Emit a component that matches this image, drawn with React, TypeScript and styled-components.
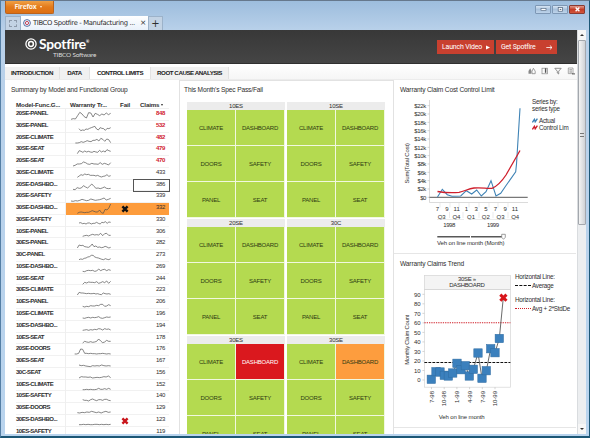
import React from 'react'
import styled, { createGlobalStyle } from 'styled-components';

// [name, claims, first x of the sparkline, heights inside of the row, mark]
type Claim = [string, number, number, number[], string?]

const claims: Claim[] = [
    ['20SE-PANEL', 848, 213, [31, 29, 30, 20, 10, 15, 23, 27, 11, 12, 24, 13, 16, 20, 15, 18, 12, 17, 13]],
    ['30SE-PANEL', 532, 237, [23, 29, 27, 28, 24, 25, 22, 20, 18, 16, 24, 27, 20, 22, 23, 28, 22, 23, 20]],
    ['20SE-CLIMATE', 482, 226, [30, 30, 29, 26, 28, 26, 23, 25, 26, 22, 22, 19, 24, 16, 19, 25, 18, 20, 29]],
    ['30SE-SEAT', 479, 232, [29, 20, 22, 25, 21, 24, 22, 24, 25, 22, 24, 25, 19, 24, 21, 24, 17, 20, 22]],
    ['20SE-SEAT', 470, 219, [30, 28, 24, 24, 23, 18, 20, 24, 25, 22, 24, 24, 25, 20, 25, 22, 24, 27, 20]],
    ['30SE-CLIMATE', 433, 232, [28, 24, 20, 22, 18, 20, 19, 22, 22, 22, 24, 22, 25, 27, 25, 24, 20, 25, 23]],
    ['20SE-DASHBO...', 386, 219, [28, 29, 23, 25, 24, 17, 21, 24, 18, 12, 19, 25, 24, 26, 24, 21, 25, 26, 25]],
    ['20SE-SAFETY', 339, 213, [30, 31, 29, 30, 28, 25, 27, 29, 28, 24, 26, 28, 27, 26, 24, 21, 27, 25, 22]],
    ['30SE-DASHBO...', 332, 232, [31, 28, 27, 28, 29, 28, 28, 26, 23, 25, 27, 27, 21, 29, 31, 19, 21, 15, 3], 'warn'],
    ['30SE-SAFETY', 330, 237, [24, 23, 26, 25, 27, 24, 24, 27, 25, 25, 22, 25, 27, 22, 23, 20, 25, 21, 22]],
    ['10SE-PANEL', 306, 248, [28, 26, 25, 27, 24, 22, 24, 23, 24, 19, 26, 20, 19, 25, 25]],
    ['30ES-PANEL', 282, 232, [30, 21, 23, 22, 26, 27, 28, 25, 18, 26, 24, 28, 27, 29, 28, 25, 27, 30, 28]],
    ['30C-PANEL', 273, 237, [29, 27, 28, 25, 24, 21, 20, 16, 16, 21, 23, 24, 26, 28, 29, 26, 28, 29, 26]],
    ['10SE-DASHBO...', 269, 248, [28, 29, 26, 25, 26, 25, 28, 27, 21, 26, 23, 22, 26, 23, 25]],
    ['10SE-SEAT', 244, 248, [31, 25, 27, 24, 25, 25, 26, 23, 28, 26, 23, 26, 21, 28, 22]],
    ['30ES-CLIMATE', 223, 232, [30, 22, 24, 24, 25, 26, 25, 26, 26, 25, 27, 26, 28, 29, 24, 26, 27, 26, 28]],
    ['10ES-PANEL', 206, 248, [28, 30, 28, 29, 26, 27, 27, 25, 26, 22, 22, 28, 27, 23, 26]],
    ['10SE-CLIMATE', 196, 248, [27, 28, 26, 25, 27, 25, 26, 25, 23, 27, 28, 26, 24, 25, 24]],
    ['10ES-DASHBO...', 194, 248, [28, 27, 26, 28, 26, 27, 25, 26, 23, 24, 27, 23, 25, 24, 27]],
    ['10ES-SEAT', 178, 248, [30, 25, 27, 28, 26, 28, 27, 25, 18, 24, 29, 27, 22, 25, 25]],
    ['20SE-DOORS', 176, 224, [30, 30, 28, 15, 16, 28, 28, 29, 28, 29, 29, 30, 29, 29, 28, 29, 30, 29, 30]],
    ['30ES-SEAT', 167, 237, [27, 29, 28, 30, 31, 32, 29, 30, 29, 30, 27, 29, 30, 29, 30]],
    ['30C-SEAT', 156, 237, [30, 26, 27, 27, 28, 27, 30, 29, 28, 29, 28, 26, 27, 24, 29]],
    ['10ES-CLIMATE', 152, 248, [29, 29, 28, 29, 28, 29, 29, 28, 25, 28, 28, 26, 28, 25, 28]],
    ['10SE-SAFETY', 140, 248, [26, 28, 28, 30, 26, 24, 27, 29, 26, 26, 28, 25, 25, 28, 29]],
    ['30SE-DOORS', 129, 232, [29, 30, 28, 29, 27, 28, 25, 27, 29, 27, 30, 27, 25, 28, 27]],
    ['30ES-DASHBO...', 123, 237, [29, 29, 28, 29, 28, 29, 29, 28, 28, 29, 28, 29, 28, 29, 28], 'fail'],
    ['10ES-SAFETY', 119, 248, [34, 34, 34, 34]],
];

const groups = ['10ES', '10SE', '20SE', '30C', '30ES', '30SE'];
const parts = ['CLIMATE', 'DASHBOARD', 'DOORS', 'SAFETY', 'PANEL', 'SEAT'];

const trend = [
    [431.3, 379.3], [436, 371.7], [440, 372], [444.3, 375.3], [448.3, 376], [452.7, 373],
    [457, 363.3], [461, 369.7], [465.3, 365.7], [469.3, 376], [473.3, 369.3], [478, 353],
    [482, 378.3], [486.3, 370.7], [490.7, 348.7], [495, 352.7], [499.3, 338.5],
];

const Spark = ({ start, values }: { start: number, values: number[] }) => {
    const step = (332 - start) / (values.length - 1);
    const points = values.map((v, i) => `${start + i * step},${v}`).join(' ');
    return (
        <SparkSvg viewBox="198 0 156 35.3">
            <polyline points={points} fill="none" stroke="#4a4a4a" strokeWidth="2" />
        </SparkSvg>
    )
}

const Cross = ({ color }: { color: string }) => (
    <svg width="8" height="8" viewBox="0 0 8 8">
        <path d="M1.4 1.4 L6.6 6.6 M6.6 1.4 L1.4 6.6" stroke={color} strokeWidth="2.4" />
    </svg>
)

const Target = ({ size, color, inner }: { size: number, color: string, inner: string }) => (
    <svg width={size} height={size} viewBox="0 0 12 12" fill="none">
        <circle cx="6" cy="6" r="5.1" stroke={color} strokeWidth="1.3" />
        <circle cx="6" cy="6" r="2.4" stroke={inner} strokeWidth="1.5" />
    </svg>
)

const ClaimTable = () => (
    <Table>
        <TableHead>
            <span>Model-Func.G...</span>
            <HeadTrend>Warranty Tr...</HeadTrend>
            <HeadFail>Fail</HeadFail>
            <HeadClaims>Claims<Caret /></HeadClaims>
        </TableHead>
        {claims.map(([name, value, start, values, mark], i) => (
            <Row key={name}>
                <Name>{name}</Name>
                <TrendCell $warn={mark === 'warn'}><Spark start={start} values={values} /></TrendCell>
                <FailCell $warn={mark === 'warn'}>
                    {mark && <Cross color={mark === 'warn' ? '#111' : '#c9151b'} />}
                </FailCell>
                <Value $warn={mark === 'warn'} $high={i < 5} $selected={i === 6}>{value}</Value>
            </Row>
        ))}
    </Table>
)

const CostChart = () => (
    <Chart width={130} height={154} viewBox="400 98 130 154">
        <path d="M429.5 100 V202.5 H528" stroke="#ccc" strokeWidth=".7" fill="none" />
        {Array.from({ length: 12 }, (_, i) => (
            <g key={i}>
                <path d={`M427.5 ${197.3 - i * 8.33} h2`} stroke="#bbb" strokeWidth=".6" />
                <text x="426.3" y={199.6 - i * 8.33} textAnchor="end" textLength={i === 0 ? 6 : i < 5 ? 8.7 : 12}>
                    {i === 0 ? '$0' : `$${i * 2}k`}
                </text>
            </g>
        ))}
        <text transform="translate(408.8 183.5) rotate(-90)" textLength="40.5">Sum(Total Cost)</text>
        <path d="M429.5 197.3 H527.7" stroke="#444" strokeWidth=".9" />
        <polyline
            points="437.5,197 442.3,189.3 447.3,194.7 452,196.3 460.7,196 466.3,190.7 471.7,194 476.7,190 481.3,196 486,191.7 491,180.7 496,196 500.7,193.3 505.7,186 515.7,171.7 516.5,164 520,108.3"
            fill="none" stroke="#3f83b5" strokeWidth="1.1" />
        <path
            d="M437.5 191.5 C444 192.6 454 192.8 459 192.4 C465 191.2 468 188.6 474 188 C482 187.2 487 189 492 188.3 C498 186 502 181 506 175 L520 150.5"
            fill="none" stroke="#cf1f2c" strokeWidth="1.3" />
        {['7', '9', '11', '1', '3', '5', '7', '9', '11'].map((label, i) => (
            <text key={i} x={437.3 + i * 9.7} y="210.7" textAnchor="middle">{label}</text>
        ))}
        {['Q3', 'Q4', 'Q1', 'Q2', 'Q3', 'Q4'].map((label, i) => (
            <text key={i} x={441.7 + i * 14.7} y="218.7" textAnchor="middle">{label}</text>
        ))}
        <path d="M440 202.5v5M450 202.5v5M459 202.5v5M469 202.5v5M479 202.5v5M489 202.5v5M498 202.5v5M508 202.5v5M449.5 212v6M463 212v6M479 212v6M493 212v6M508 212v6M437 219.5H464M468 219.5H519" stroke="#ddd" strokeWidth=".6" />
        <text x="449.3" y="226.8" textAnchor="middle" textLength="12">1998</text>
        <text x="493" y="226.8" textAnchor="middle" textLength="12">1999</text>
        <path d="M437.3 236.8 H470 M471 236.8 H502" stroke="#585858" strokeWidth="1.5" />
        <path d="M501.7 234.3 h3.6 v3 l-1.8 2 l-1.8 -2 z" fill="#fff" stroke="#777" strokeWidth=".7" />
        <text x="437" y="244.7" textLength="67.5">Veh on line month (Month)</text>
    </Chart>
)

const TrendChart = () => (
    <Chart width={113} height={150} viewBox="400 272 113 150">
        <rect x="424.4" y="275.4" width="86" height="14.2" fill="#f4f4f4" stroke="#d5d5d5" strokeWidth=".7" />
        <rect x="424.4" y="289.6" width="86" height="97.6" fill="none" stroke="#d5d5d5" strokeWidth=".7" />
        <text x="467" y="281.3" textAnchor="middle" textLength="18">30SE »</text>
        <text x="467" y="287.4" textAnchor="middle" textLength="35.5">DASHBOARD</text>
        {Array.from({ length: 10 }, (_, i) => (
            <g key={i}>
                <path d={`M422.4 ${380 - i * 9.52} h2`} stroke="#bbb" strokeWidth=".6" />
                <text x="420.7" y={382.3 - i * 9.52} textAnchor="end">{i * 10}</text>
            </g>
        ))}
        <text transform="translate(408.8 364.8) rotate(-90)" textLength="50">Monthly Claim Count</text>
        <path d="M424.4 322.7 H510.4" stroke="#d0202a" strokeWidth="1.1" strokeDasharray="1.3 1" />
        <path d="M424.4 362.5 H510.4" stroke="#111" strokeWidth="1.1" strokeDasharray="2.8 1.2" />
        <polyline points={[...trend, [503.3, 297.7]].map(p => p.join(',')).join(' ')} fill="none" stroke="#444" strokeWidth=".8" />
        {trend.map(([x, y]) => (
            <rect key={x} x={x - 4.2} y={y - 4.2} width="8.4" height="8.4" fill="#3b80bd" stroke="#2f6a9f" strokeWidth=".5" />
        ))}
        <path d="M500.3 294.6 l6.2 6.2 M506.5 294.6 l-6.2 6.2" stroke="#d8161c" strokeWidth="3" />
        {['7-98', '10-98', '1-99', '4-99', '7-99', '10-99'].map((label, i) => (
            <g key={label}>
                <path d={`M${431.5 + i * 12.7} 387.2 v2`} stroke="#bbb" strokeWidth=".6" />
                <text transform={`translate(${433.7 + i * 12.7} 391) rotate(-90)`} textAnchor="end">{label}</text>
            </g>
        ))}
        <text x="438.7" y="418.6" textLength="46">Veh on line month</text>
    </Chart>
)

const App = () => (
    <>
        <GlobalStyle />
        <Window>
            <TitleBar>
                <FirefoxButton>Firefox <Caret /></FirefoxButton>
                <Controls>
                    <Control><svg width="7" height="5"><rect x="1" y="1.5" width="5" height="2" fill="#fff" stroke="#4a5f78" strokeWidth=".6" /></svg></Control>
                    <Control><svg width="7" height="5"><rect x="1.2" y=".6" width="4.4" height="3.6" fill="#fff" stroke="#4a5f78" strokeWidth=".7" /><path d="M2.7 2.4h1.6" stroke="#4a5f78" /></svg></Control>
                    <Control $close><svg width="7" height="5"><path d="M1.6 .6l3.8 3.6M5.4 .6L1.6 4.2" stroke="#fff" strokeWidth="1.4" /></svg></Control>
                </Controls>
            </TitleBar>
            <BrowserTabs>
                <PinnedTab><i /></PinnedTab>
                <BrowserTab>
                    <Target size={8} color="#3f5c96" inner="#c2455c" />
                    <span>TIBCO Spotfire - Manufacturing ...</span>
                    <b>×</b>
                </BrowserTab>
                <NewTab>+</NewTab>
            </BrowserTabs>
            <Body>
                <Page>
                    <Header>
                        <Logo>
                            <Target size={12} color="#fff" inner="#fff" />
                            <div>
                                <Brand>Spotfire<sup>®</sup></Brand>
                                <Company>TIBCO Software</Company>
                            </div>
                        </Logo>
                        <Actions>
                            <ActionButton $width={57}>Launch Video <svg width="4" height="5"><path d="M0 .5L4 2.5L0 4.5z" fill="#fff" /></svg></ActionButton>
                            <ActionButton $width={61}>Get Spotfire <svg width="7" height="5"><path d="M.3 2.5H6M3.8 .4L6 2.5L3.8 4.6" fill="none" stroke="#fff" strokeWidth=".8" /></svg></ActionButton>
                        </Actions>
                    </Header>
                    <NavBar>
                        <NavTab $width={55}>INTRODUCTION</NavTab>
                        <NavTab $width={30}>DATA</NavTab>
                        <NavTab $width={61} $active>CONTROL LIMITS</NavTab>
                        <NavTab $width={78}>ROOT CAUSE ANALYSIS</NavTab>
                        <Tools>
                            <svg width="8" height="8" viewBox="0 0 8 8"><path d="M.5 6.8V4L2.2 1.3L3.4 3.8V6.8z" fill="#888" /><path d="M4 6.7V4.2L5.4 1.3L7.2 4.2V6.7z" fill="none" stroke="#888" strokeWidth=".8" /></svg>
                            <svg width="8" height="8" viewBox="0 0 8 8"><rect x="1" y="1.2" width="5.6" height="5.6" fill="none" stroke="#888" strokeWidth=".7" /><path d="M4.6 1.2V5.8" stroke="#555" strokeWidth="1.4" /></svg>
                            <svg width="8" height="8" viewBox="0 0 8 8"><path d="M.8 1.3H7.2L4.7 4.2V7L3.3 6V4.2z" fill="none" stroke="#777" strokeWidth=".8" /></svg>
                            <svg width="8" height="8" viewBox="0 0 8 8"><path d="M1.3 1H6V6.6H1.3zM2.4 2.6H5M2.4 4H5M2.4 5.2H5" fill="none" stroke="#888" strokeWidth=".7" /><path d="M5 6.9H8" stroke="#555" /></svg>
                        </Tools>
                    </NavBar>
                    <Panels>
                        <SummaryPanel>
                            <PanelTitle>Summary by Model and Functional Group</PanelTitle>
                            <ClaimTable />
                        </SummaryPanel>
                        <SpecPanel>
                            <PanelTitle>This Month's Spec Pass/Fail</PanelTitle>
                            <TreeMap>
                                {groups.map(group => (
                                    <Group key={group}>
                                        <GroupName>{group}</GroupName>
                                        {parts.map(part => (
                                            <Tile key={part} $state={part === 'DASHBOARD' ? group : ''}>{part}</Tile>
                                        ))}
                                    </Group>
                                ))}
                            </TreeMap>
                        </SpecPanel>
                        <ChartColumn>
                            <ChartPanel>
                                <PanelTitle>Warranty Claim Cost Control Limit</PanelTitle>
                                <ChartRow>
                                    <CostChart />
                                    <SeriesLegend>
                                        <p>Series by:<br />series type</p>
                                        <LegendItem><Zig color="#3f83b5" />Actual</LegendItem>
                                        <LegendItem><Zig color="#cf1f2c" />Control Lim</LegendItem>
                                    </SeriesLegend>
                                </ChartRow>
                            </ChartPanel>
                            <ChartPanel>
                                <PanelTitle>Warranty Claims Trend</PanelTitle>
                                <ChartRow>
                                    <TrendChart />
                                    <LineLegend>
                                        <p>Horizontal Line:</p>
                                        <LegendItem><Dash />Average</LegendItem>
                                        <p>Horizontal Line:</p>
                                        <LegendItem><Dash $dotted />Avg + 2*StdDe</LegendItem>
                                    </LineLegend>
                                </ChartRow>
                            </ChartPanel>
                        </ChartColumn>
                    </Panels>
                </Page>
                <ScrollBar>
                    <ScrollArrow $up />
                    <Thumb><i /></Thumb>
                    <ScrollArrow />
                </ScrollBar>
            </Body>
        </Window>
    </>
)

const Zig = ({ color }: { color: string }) => (
    <svg width="6" height="5" viewBox="0 0 6 5"><path d="M.4 4.4L2.4 1.4L3.2 3.8L5.4 .6" fill="none" stroke={color} strokeWidth="1.4" /></svg>
)

const GlobalStyle = createGlobalStyle`
    * { box-sizing: border-box; }
    body {
        margin: 0;
        overflow: hidden;
        font-family: "Liberation Sans", Arial, sans-serif;
        color: #2e2e2e;
    }
    svg { flex: none; display: block; }
`
const Window = styled.div`
    width: 590px;
    height: 438px;
    display: flex;
    flex-direction: column;
    background: linear-gradient(#9dbddd, #b9d1ea 30px, #b9d4ee);
    border: solid #1c5776;
    border-width: 1px 1px 2px 1px;
    border-top-color: #66788c;
    border-left-color: #557fa5;
    padding: 0 3px 2px 4px;
    overflow: hidden;
`
const TitleBar = styled.div`
    height: 15px;
    flex: none;
    display: flex;
    justify-content: space-between;
`
const Caret = styled.i`
    display: inline-block;
    margin-left: 2px;
    border: 1.5px solid transparent;
    border-top: 2px solid currentColor;
    border-bottom: 0;
    vertical-align: 1.5px;
`
const FirefoxButton = styled.div`
    width: 49px;
    height: 13px;
    padding-left: 8.5px;
    font: bold 6.8px/11px "Open Sans", sans-serif;
    letter-spacing: -0.25px;
    color: #fff3e3;
    background: linear-gradient(#f0a045, #e37a1b 50%, #dd6f12);
    border: 1px solid #b9621d;
    border-top: 0;
    border-radius: 0 0 2px 2px;
`
const Controls = styled.div`
    display: flex;
    gap: 1px;
    padding: 4px 1px 0 0;
`
const Control = styled.div<{ $close?: boolean }>`
    width: 16px;
    height: 9px;
    display: flex;
    align-items: center;
    justify-content: center;
    border: 1px solid ${props => props.$close ? '#8a3b32' : '#7e98b5'};
    border-radius: 1px;
    background: ${props => props.$close ? 'linear-gradient(#e09a8c, #c43d27 50%, #d2563c)' : 'linear-gradient(#d6e4f3, #a9c2dc 50%, #bdd3ea)'};
`
const BrowserTabs = styled.div`
    height: 14px;
    flex: none;
    display: flex;
`
const PinnedTab = styled.div`
    width: 16px;
    padding: 3px 0 0 3px;
    background: #c3d3e4;
    border: 1px solid #9cb2c9;
    border-bottom: 0;
    i {
        display: block;
        width: 8px;
        height: 7px;
        border: 1px dashed #8d9aaa;
    }
`
const BrowserTab = styled.div`
    width: 127px;
    display: flex;
    align-items: center;
    padding-left: 2px;
    background: linear-gradient(#fff, #e9f1fa);
    font: 6.8px/12px "DejaVu Sans", sans-serif;
    letter-spacing: -0.36px;
    white-space: nowrap;
    span {
        width: 109px;
        padding-left: 2px;
    }
    b {
        font-size: 7.5px;
        font-weight: normal;
    }
`
const NewTab = styled.div`
    width: 15px;
    text-align: center;
    font: 10px/13px "DejaVu Sans", sans-serif;
    background: #c3d3e4;
    border: 1px solid #9cb2c9;
    border-bottom: 0;
`
const Body = styled.div`
    flex: 1;
    min-height: 0;
    display: flex;
`
const Page = styled.div`
    width: 572px;
    display: flex;
    flex-direction: column;
    background: #fff;
`
const Header = styled.div`
    height: 34px;
    flex: none;
    display: flex;
    justify-content: space-between;
    padding: 7px 20px 0 20px;
    background: linear-gradient(#383838, #454545);
    border-bottom: 1px solid #2f2f2f;
`
const Logo = styled.div`
    display: flex;
    color: #fff;
    > svg { margin-top: 1px; }
`
const Brand = styled.div`
    height: 13px;
    padding-left: 2px;
    font: bold 13.8px/14px Lato, sans-serif;
    letter-spacing: -0.25px;
    sup {
        font-size: 4px;
        vertical-align: 6px;
        line-height: 0;
    }
`
const Company = styled.div`
    padding-left: 16px;
    margin-top: 1px;
    font: 6.4px/7px Lato, sans-serif;
    letter-spacing: -0.2px;
    white-space: nowrap;
    color: #ddd;
`
const Actions = styled.div`
    display: flex;
    gap: 2px;
    padding-top: 3px;
`
const ActionButton = styled.div<{ $width: number }>`
    width: ${props => props.$width}px;
    height: 14px;
    display: flex;
    align-items: center;
    justify-content: space-between;
    padding: 0 4px 0 5px;
    font: 7px/14px Roboto, sans-serif;
    letter-spacing: -0.2px;
    white-space: nowrap;
    color: #fff;
    background: #c8402f;
`
const NavBar = styled.div`
    height: 16px;
    flex: none;
    display: flex;
    padding-top: 3px;
    background: linear-gradient(#fff, #f6f6f6);
    border-bottom: 1px solid #ececec;
`
const NavTab = styled.div<{ $width: number, $active?: boolean }>`
    width: ${props => props.$width}px;
    text-align: center;
    font: bold 6.2px/12px "Liberation Sans", sans-serif;
    letter-spacing: -0.45px;
    white-space: nowrap;
    color: #222;
    background: ${props => props.$active ? '#fff' : '#f1f1f1'};
    border-right: 1px solid #e2e2e2;
`
const Tools = styled.div`
    flex: 1;
    display: flex;
    justify-content: flex-end;
    gap: 5px;
    padding-right: 2px;
`
const Panels = styled.div`
    flex: 1;
    min-height: 0;
    display: flex;
    overflow: hidden;
`
const SummaryPanel = styled.div`
    width: 174px;
    padding: 5px 0 0 6px;
    flex: none;
`
const SpecPanel = styled.div`
    width: 215px;
    flex: none;
    padding: 4px 0 0 4px;
    border: solid #e2e2e2;
    border-width: 1px 1px 0 1px;
`
const ChartColumn = styled.div`
    flex: 1;
    padding-right: 1px;
`
const ChartPanel = styled.div`
    height: 174px;
    padding: 5px 0 0 6px;
    overflow: hidden;
    border-bottom: 1px solid #e6e6e6;
`
const PanelTitle = styled.div`
    height: 13px;
    font-size: 6.6px;
    line-height: 9px;
    letter-spacing: -0.15px;
    white-space: nowrap;
`
const Table = styled.div`
    width: 153px;
    margin-left: 5px;
`
const columns = '50px 52px 16px 35px';
const TableHead = styled.div`
    height: 11px;
    display: grid;
    grid-template-columns: ${columns};
    font-size: 6.2px;
    font-weight: bold;
    line-height: 13px;
    letter-spacing: -0.15px;
    white-space: nowrap;
    border-bottom: 1px solid #efefef;
`
const HeadTrend = styled.span`
    padding-left: 4px;
`
const HeadFail = styled.span`
    padding-left: 2px;
`
const HeadClaims = styled.span`
    padding-left: 6px;
`
const Row = styled.div`
    height: 11.77px;
    display: grid;
    grid-template-columns: ${columns};
    font-size: 6px;
    line-height: 9px;
    border-bottom: 1px solid #f1f1f1;
`
const Name = styled.div`
    font-weight: bold;
    letter-spacing: -0.47px;
    white-space: nowrap;
    border-right: 1px solid #efefef;
`
const TrendCell = styled.div<{ $warn: boolean }>`
    background: ${props => props.$warn ? '#fd9c3c' : 'none'};
`
const SparkSvg = styled.svg`
    width: 52px;
    height: 11.77px;
`
const FailCell = styled.div<{ $warn: boolean }>`
    padding: 2px 0 0 3px;
    background: ${props => props.$warn ? '#fd9c3c' : 'none'};
`
const Value = styled.div<{ $warn: boolean, $high: boolean, $selected: boolean }>`
    padding-right: 4px;
    text-align: right;
    letter-spacing: -0.3px;
    font-weight: ${props => props.$high ? 'bold' : 'normal'};
    color: ${props => props.$high ? '#d0202c' : '#2e2e2e'};
    background: ${props => props.$warn ? '#fd9c3c' : 'none'};
    outline: ${props => props.$selected ? '1px solid #555' : 'none'};
    outline-offset: -0.5px;
`
const TreeMap = styled.div`
    width: 198px;
    margin: 4px 0 0 3px;
    display: grid;
    grid-template-columns: 98px 98px;
    column-gap: 2px;
    row-gap: 1px;
`
const Group = styled.div`
    display: grid;
    grid-template-columns: 1fr 1fr;
    grid-template-rows: 8px 36px 36px 36px;
    font-size: 6px;
    letter-spacing: -0.2px;
`
const GroupName = styled.div`
    grid-column: 1/3;
    text-align: center;
    line-height: 8px;
    background: #ececec;
`
const Tile = styled.div<{ $state: string }>`
    display: flex;
    align-items: center;
    justify-content: center;
    color: ${props => props.$state === '30ES' ? '#fff' : '#2e3a12'};
    background: ${props => props.$state === '30ES' ? '#da181e' : props.$state === '30SE' ? '#fd9d3e' : '#b4da50'};
    border: solid #f1f8e0;
    border-width: 0 1px 1px 0;
`
const ChartRow = styled.div`
    display: flex;
`
const Chart = styled.svg`
    font-size: 6px;
    fill: #2e2e2e;
`
const SeriesLegend = styled.div`
    padding: 0 0 0 2px;
    font-size: 6.3px;
    line-height: 7px;
    letter-spacing: -0.25px;
    white-space: nowrap;
    p { margin: 0 0 5px; }
`
const LegendItem = styled.div`
    height: 7px;
    display: flex;
    align-items: center;
    gap: 1px;
    line-height: 7px;
`
const LineLegend = styled.div`
    padding: 1px 0 0 2px;
    font-size: 6.3px;
    line-height: 7px;
    letter-spacing: -0.25px;
    white-space: nowrap;
    p { margin: 0 0 2px; }
    ${LegendItem} { margin-bottom: 6.5px; }
`
const Dash = styled.i<{ $dotted?: boolean }>`
    width: 16px;
    border-top: 1px ${props => props.$dotted ? 'dotted #d0202a' : 'dashed #111'};
`
const ScrollBar = styled.div`
    flex: 1;
    display: flex;
    flex-direction: column;
    background: #eceef0;
    border-left: 1px solid #d9dcdf;
`
const ScrollArrow = styled.div<{ $up?: boolean }>`
    height: 10px;
    flex: none;
    display: flex;
    align-items: center;
    justify-content: center;
    margin-top: ${props => props.$up ? 0 : 'auto'};
    background: #f6f6f6;
    &::after {
        content: '';
        border: 2px solid transparent;
        ${props => props.$up ? 'border-bottom-color: #333; border-top: 0;' : 'border-top-color: #333; border-bottom: 0;'}
    }
`
const Thumb = styled.div`
    height: 185px;
    display: flex;
    align-items: center;
    justify-content: center;
    background: linear-gradient(90deg, #f4f4f4, #cfd2d6);
    border: 1px solid #a4a8ae;
    border-radius: 1px;
    i {
        width: 4px;
        height: 4px;
        margin-top: 4px;
        border: solid #777;
        border-width: 1px 0;
    }
`

export default App
